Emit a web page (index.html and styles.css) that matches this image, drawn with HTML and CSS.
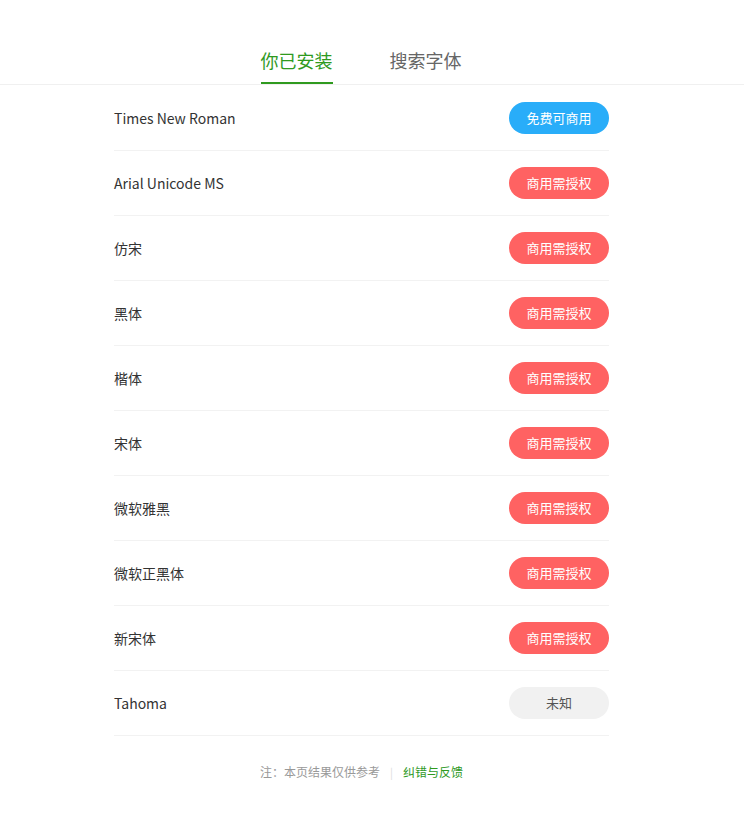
FILE: index.html
```html
<!DOCTYPE html>
<html lang="zh-CN">
<head>
<meta charset="utf-8">
<title>字体</title>
<link rel="stylesheet" href="styles.css">
</head>
<body>
<div class="header">
  <div class="tabs">
    <a class="tab active">你已安装</a>
    <a class="tab">搜索字体</a>
  </div>
</div>
<div class="main">
  <ul class="list">
    <li class="row"><span class="name">Times New Roman</span><span class="pill free">免费可商用</span></li>
    <li class="row"><span class="name">Arial Unicode MS</span><span class="pill paid">商用需授权</span></li>
    <li class="row"><span class="name">仿宋</span><span class="pill paid">商用需授权</span></li>
    <li class="row"><span class="name">黑体</span><span class="pill paid">商用需授权</span></li>
    <li class="row"><span class="name">楷体</span><span class="pill paid">商用需授权</span></li>
    <li class="row"><span class="name">宋体</span><span class="pill paid">商用需授权</span></li>
    <li class="row"><span class="name">微软雅黑</span><span class="pill paid">商用需授权</span></li>
    <li class="row"><span class="name">微软正黑体</span><span class="pill paid">商用需授权</span></li>
    <li class="row"><span class="name">新宋体</span><span class="pill paid">商用需授权</span></li>
    <li class="row"><span class="name">Tahoma</span><span class="pill unknown">未知</span></li>
  </ul>
  <div class="footer">
    <span class="note">注：本页结果仅供参考</span>
    <span class="sep">|</span>
    <a class="link">纠错与反馈</a>
  </div>
</div>
</body>
</html>
```
FILE: styles.css
```css
* { box-sizing: border-box; }
html, body { margin: 0; padding: 0; background: #fff; }
body {
  font-family: "Microsoft YaHei", "Noto Sans CJK SC", "Noto Sans", sans-serif;
  color: #333;
}
.header {
  border-bottom: 1px solid #f0f0f0;
}
.tabs {
  display: flex;
  justify-content: center;
  gap: 57px;
  padding-right: 22px;
}
.tab {
  display: block;
  padding-top: 48px;
  padding-bottom: 10px;
  font-size: 18px;
  line-height: 24px;
  color: #666;
  border-bottom: 2px solid transparent;
  cursor: pointer;
}
.tab.active {
  color: #2f9a1f;
  border-bottom-color: #2f9a1f;
}
.main {
  padding-right: 21px;
}
.list {
  list-style: none;
  margin: 0 auto;
  padding: 1px 0 0;
  width: 495px;
}
.row {
  display: flex;
  align-items: center;
  justify-content: space-between;
  height: 65px;
  border-bottom: 1px solid #f2f2f2;
  padding-bottom: 1px;
}
.name {
  font-size: 14px;
  line-height: 20px;
  color: #333;
}
.pill {
  display: flex;
  align-items: center;
  justify-content: center;
  width: 100px;
  height: 32px;
  border-radius: 16px;
  font-size: 13px;
  color: #fff;
}
.pill.free { background: #29adf9; }
.pill.paid { background: #ff6262; }
.pill.unknown { background: #f1f1f1; color: #555; }
.footer {
  display: flex;
  justify-content: center;
  align-items: center;
  gap: 10px;
  padding-top: 28px;
  font-size: 12px;
  line-height: 16px;
}
.note { color: #999; }
.sep { color: #ddd; font-size: 11px; }
.link { color: #2f9a1f; cursor: pointer; }
```
